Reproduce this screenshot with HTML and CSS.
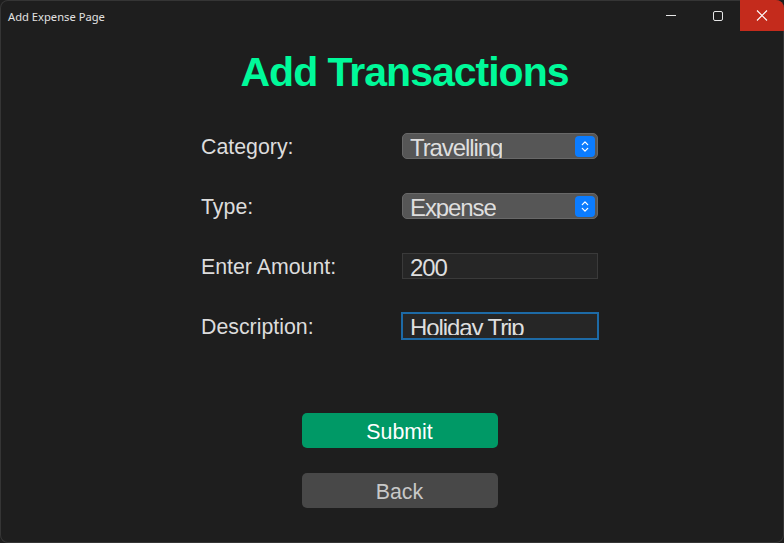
FILE: index.html
```html
<!DOCTYPE html>
<html lang="en">
<head>
<meta charset="utf-8">
<title>Add Expense Page</title>
<link rel="stylesheet" href="styles.css">
</head>
<body>
<div class="window">
  <div class="titlebar">
    <div class="wintitle">Add Expense Page</div>
    <div class="controls">
      <div class="ctl">
        <svg width="46" height="31" viewBox="0 0 46 31"><line x1="18" y1="15.5" x2="28" y2="15.5" stroke="#e6e6e6" stroke-width="1"/></svg>
      </div>
      <div class="ctl">
        <svg width="46" height="31" viewBox="0 0 46 31"><rect x="19.5" y="11.5" width="9" height="9" rx="1.5" fill="none" stroke="#e6e6e6" stroke-width="1"/></svg>
      </div>
      <div class="ctl close">
        <svg width="44" height="31" viewBox="0 0 44 31"><path d="M17 10.5 L27 20.5 M27 10.5 L17 20.5" stroke="#ffffff" stroke-width="1.1" fill="none"/></svg>
      </div>
    </div>
  </div>

  <div class="content">
    <h1 class="heading">Add Transactions</h1>

    <div class="form">
      <div class="label">Category:</div>
      <div class="select">
        <span class="value clip">Travelling</span>
        <span class="spin">
          <svg width="20" height="21" viewBox="0 0 20 21"><path d="M7.3 8.6 L10 5.9 L12.7 8.6 M7.3 12.4 L10 15.1 L12.7 12.4" stroke="#ffffff" stroke-width="1.3" fill="none" stroke-linecap="round" stroke-linejoin="round"/></svg>
        </span>
      </div>

      <div class="label">Type:</div>
      <div class="select">
        <span class="value clip">Expense</span>
        <span class="spin">
          <svg width="20" height="21" viewBox="0 0 20 21"><path d="M7.3 8.6 L10 5.9 L12.7 8.6 M7.3 12.4 L10 15.1 L12.7 12.4" stroke="#ffffff" stroke-width="1.3" fill="none" stroke-linecap="round" stroke-linejoin="round"/></svg>
        </span>
      </div>

      <div class="label">Enter Amount:</div>
      <div class="entry">
        <span class="value">200</span>
      </div>

      <div class="label">Description:</div>
      <div class="entry focused">
        <span class="value clip">Holiday Trip</span>
      </div>
    </div>

    <div class="btn submit">Submit</div>
    <div class="btn back">Back</div>
  </div>
</div>
</body>
</html>
```

FILE: styles.css
```css
html, body {
  margin: 0;
  padding: 0;
  background: #1e1e1e;
}

.window {
  width: 784px;
  height: 543px;
  background: #1e1e1e;
  border-radius: 8px;
  overflow: hidden;
  box-shadow: inset 0 0 0 1px #353535;
  font-family: "Liberation Sans", Arial, sans-serif;
}

.titlebar {
  height: 31px;
  display: flex;
  align-items: center;
  justify-content: space-between;
}

.wintitle {
  padding-left: 8px;
  font-family: "Noto Sans", "Open Sans", sans-serif;
  font-size: 11.2px;
  color: #e2e2e2;
  line-height: 31px;
  padding-top: 1px;
}

.controls {
  display: flex;
  height: 31px;
}

.ctl {
  width: 46px;
  height: 31px;
  display: flex;
}

.ctl.close {
  width: 44px;
  background: #c42b1c;
}

.content {
  margin-left: 201px;
  width: 397px;
  padding-top: 17px;
  display: flex;
  flex-direction: column;
}

.heading {
  margin: 0;
  padding-left: 10px;
  font-size: 41px;
  font-weight: bold;
  letter-spacing: -1px;
  line-height: 48px;
  text-align: center;
  color: #00fa9a;
}

.form {
  margin-top: 37px;
  display: grid;
  grid-template-columns: 201px 196px;
  grid-auto-rows: 26px;
  row-gap: 34px;
}

.label {
  font-size: 21.33px;
  line-height: 23px;
  padding-top: 3px;
  color: #dcdcdc;
}

.select {
  box-sizing: border-box;
  height: 26px;
  border: 1px solid #686868;
  border-radius: 5px;
  background: #565656;
  display: flex;
  align-items: center;
  padding-left: 7px;
  padding-right: 2px;
}

.value {
  display: block;
  font-size: 24px;
  letter-spacing: -1.1px;
  line-height: 27px;
  color: #dedede;
  align-self: flex-start;
}

.value.clip {
  height: 24px;
  overflow: hidden;
}

.spin {
  margin-left: auto;
  width: 20px;
  height: 21px;
  border-radius: 4px;
  background: #0b7cff;
  display: flex;
}

.entry {
  box-sizing: border-box;
  height: 26px;
  border: 1px solid #3a3a3a;
  background: #262626;
  padding-left: 7px;
}

.entry.focused {
  margin: -1px;
  height: 28px;
  border: 2px solid #1d6aa6;
  padding-left: 7px;
}

.entry.focused .value.clip {
  height: 21px;
}

.btn {
  align-self: center;
  width: 196px;
  height: 35px;
  box-sizing: border-box;
  padding-top: 3px;
  line-height: 32px;
  border-radius: 5px;
  text-align: center;
  font-size: 21.33px;
}

.submit {
  margin-top: 74px;
  background: #009966;
  color: #ffffff;
}

.back {
  margin-top: 25px;
  background: #484848;
  color: #c8c8c8;
}
```
